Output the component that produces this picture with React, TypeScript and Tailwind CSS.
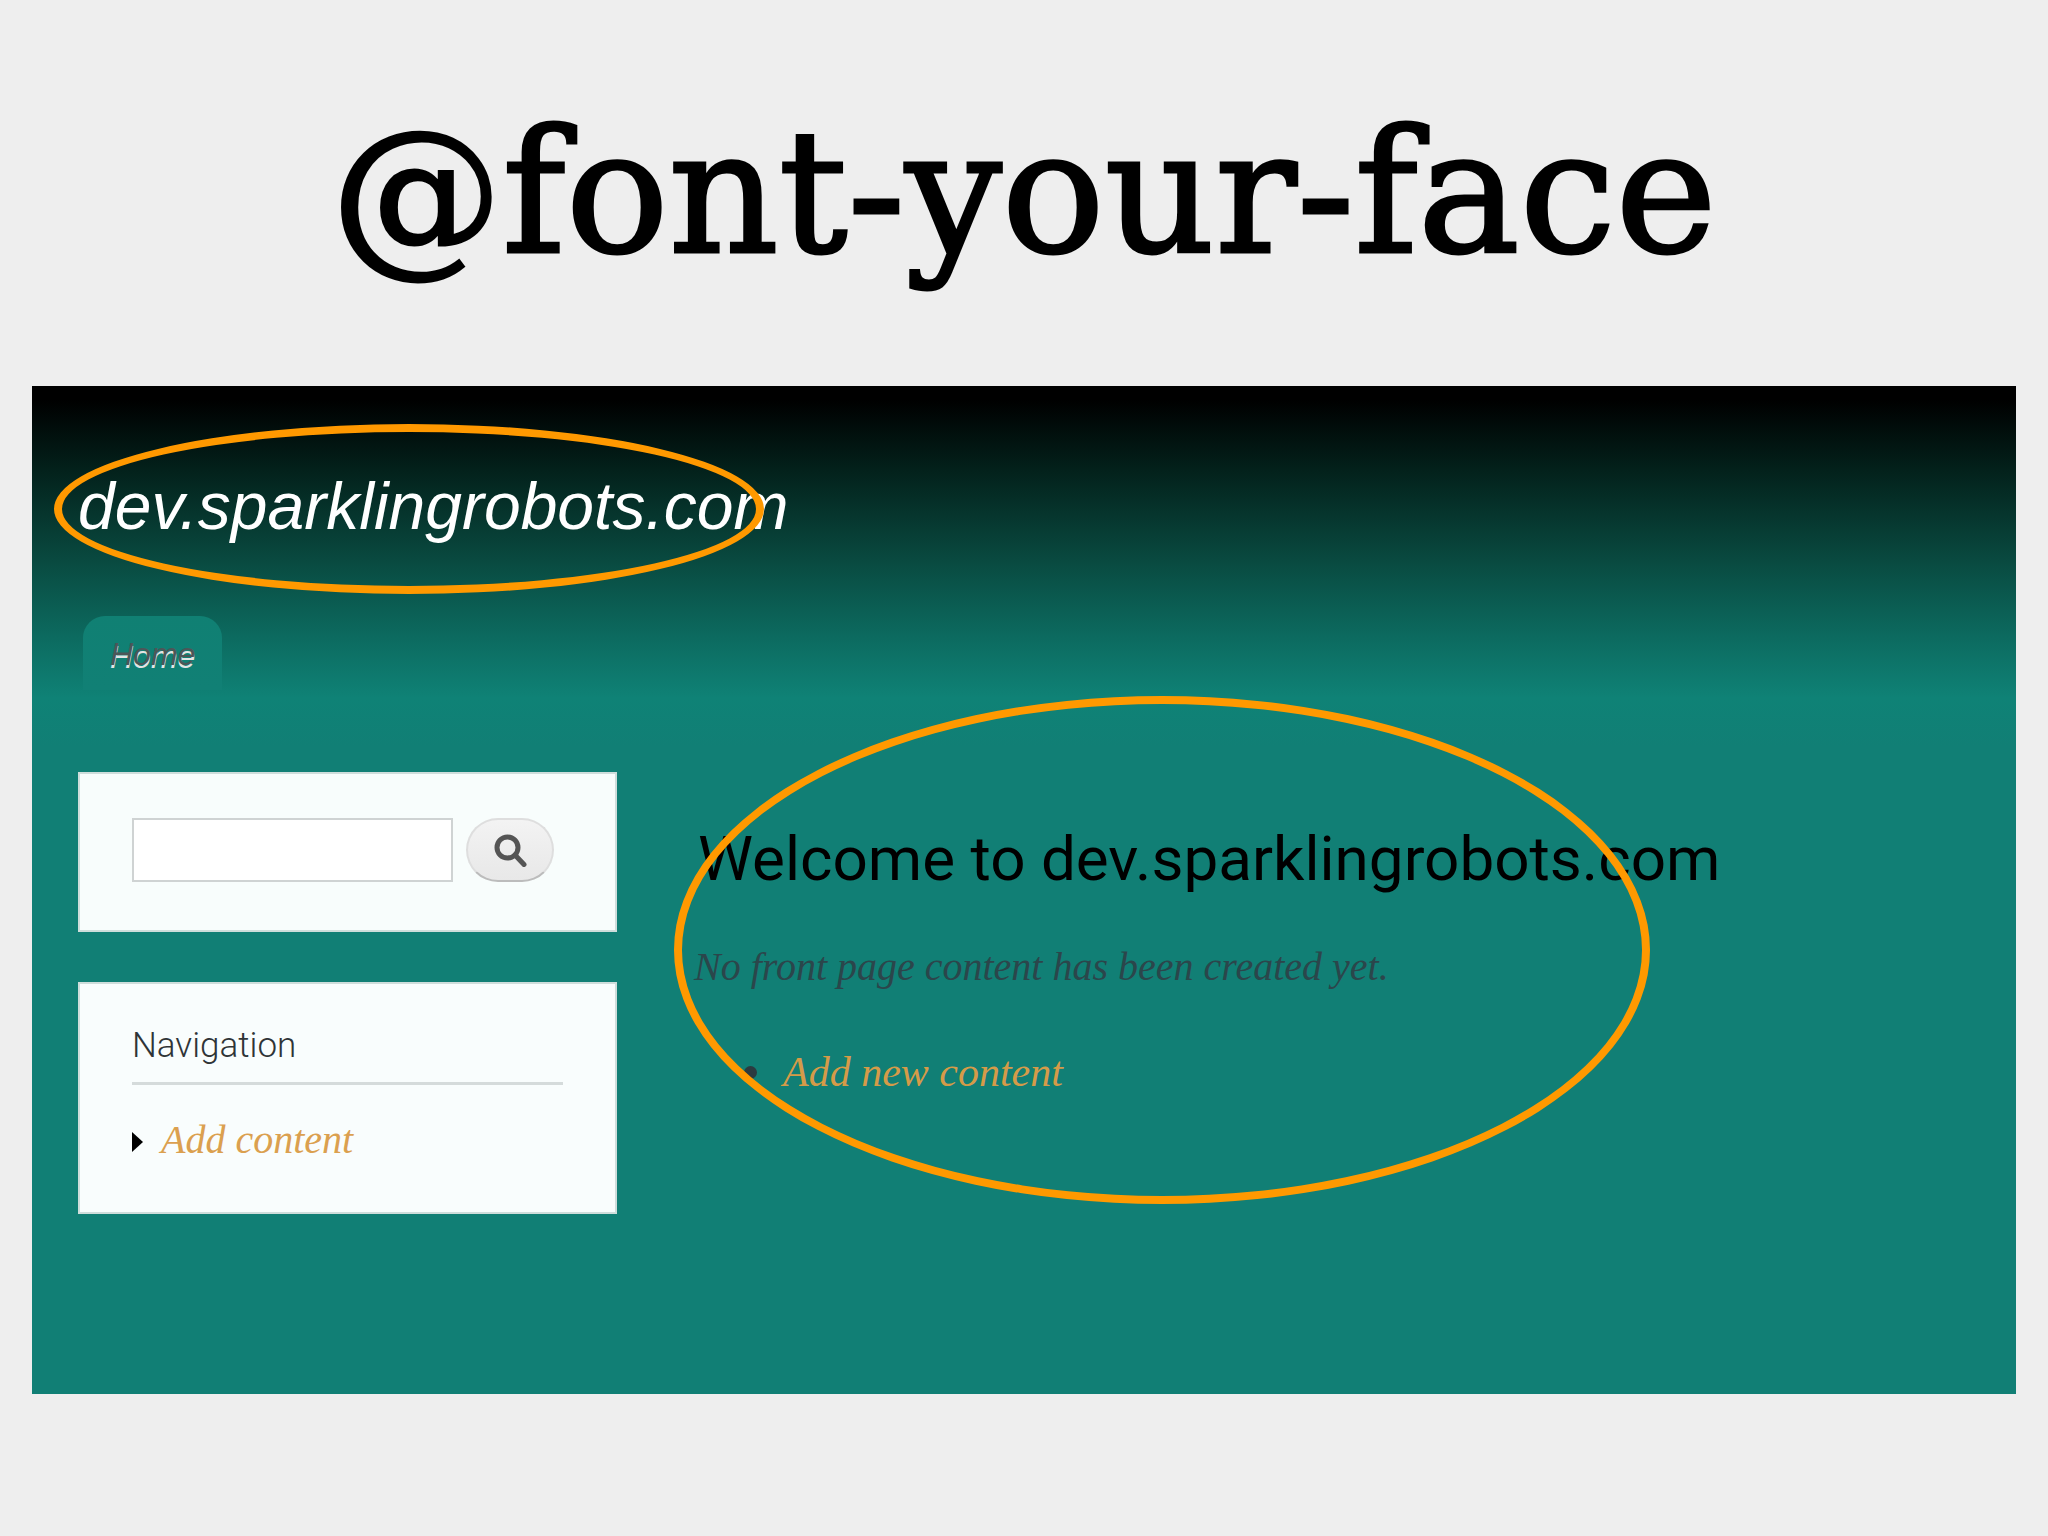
import React from "react";

function SearchIcon() {
  return (
    <svg viewBox="0 0 33 33" className="size-[33px]" fill="none" stroke="#555" aria-hidden="true">
      <circle cx="13.5" cy="13.5" r="10.5" strokeWidth="5" />
      <path d="M21 21 L30 30.5" strokeWidth="5" strokeLinecap="round" />
    </svg>
  );
}

function SiteHeader() {
  return (
    <header className="px-[46px] pt-[84px]">
      <p className="font-['Liberation_Sans',sans-serif] text-[66px] leading-[72px] text-white italic">
        <a href="#">dev.sparklingrobots.com</a>
      </p>
      <nav className="mt-[74px] ml-[5px] flex">
        <a
          href="#"
          className="rounded-t-[22px] bg-linear-to-b from-[#108073] to-[#118075] px-[27px] pt-[18px] pb-4 font-['Liberation_Sans',sans-serif] text-[32px] leading-10 text-[#4c5658] italic [text-shadow:0_3px_0_#e2e4e4]"
        >
          Home
        </a>
      </nav>
    </header>
  );
}

function Sidebar() {
  return (
    <aside className="flex w-[539px] shrink-0 flex-col gap-[50px]">
      <form
        role="search"
        onSubmit={(e) => e.preventDefault()}
        className="flex gap-[13px] border-2 border-[#cfdddb] bg-[#f8fdfc] px-[52px] pt-[44px] pb-[48px]"
      >
        <input
          type="text"
          aria-label="Search"
          className="h-16 w-[321px] border-2 border-[#cfd3d3] bg-white px-3 text-[32px] outline-none"
        />
        <button
          type="submit"
          aria-label="Search"
          className="flex h-16 w-[88px] items-center justify-center rounded-full border-2 border-[#dedede] border-b-[#bcbcbc] bg-linear-to-b from-[#f3f3f3] to-[#e8e8e8]"
        >
          <SearchIcon />
        </button>
      </form>
      <section className="border-2 border-[#cfdddb] bg-[#f9fdfd] px-[52px] pt-[40px] pb-[48px]">
        <h2 className="border-b-3 border-[#d5dbdb] pb-[14px] font-[Roboto,sans-serif] text-[35px] leading-[44px] font-light text-[#2f3437]">
          Navigation
        </h2>
        <ul className="pt-[31px]">
          <li className="flex items-center gap-[18px]">
            <svg viewBox="0 0 11 20" className="mt-1 h-5 w-[11px]" aria-hidden="true">
              <path d="M0 0 L11 10 L0 20Z" />
            </svg>
            <a href="#" className="font-['Liberation_Serif',serif] text-[40px] leading-[48px] text-[#dba04f] italic">
              Add content
            </a>
          </li>
        </ul>
      </section>
    </aside>
  );
}

function Content() {
  return (
    <main className="flex-1 pt-[49px] font-['Liberation_Serif',serif] text-[40px] leading-[48px] italic">
      <h2 className="pl-1 font-[Roboto,sans-serif] text-[62px] leading-[76px] text-black not-italic">
        Welcome to dev.sparklingrobots.com
      </h2>
      <p className="mt-[46px] text-[#2b464b]">No front page content has been created yet.</p>
      <ul className="mt-[57px]">
        <li className="flex items-center gap-[26px] pl-[50px]">
          <span className="size-[13px] rounded-full bg-[#2b3b40]" />
          <a href="#" className="text-[42px] text-[#d59b48]">
            Add new content
          </a>
        </li>
      </ul>
    </main>
  );
}

export default function App() {
  return (
    <div className="min-h-screen bg-[#eee] pb-[142px]">
      <h1 className="py-[93px] text-center font-['DejaVu_Serif',serif] text-[171px] leading-[200px] text-black [-webkit-text-stroke:3px_#000]">
        @font-your-face
      </h1>
      <div className="relative mx-8 bg-[#117f75] bg-[linear-gradient(to_bottom,#000_0px,#000_14px,#03211b_84px,#094a40_175px,#0c6a5f_250px,#0f8276_312px,#117f75_360px)] pb-[180px]">
        <SiteHeader />
        <div className="flex gap-[77px] px-[46px] pt-[82px]">
          <Sidebar />
          <Content />
        </div>
        <div className="pointer-events-none absolute top-[38px] left-[22px] h-[170px] w-[710px] rounded-[50%] border-8 border-[#ff9900]" />
        <div className="pointer-events-none absolute top-[310px] left-[642px] h-[508px] w-[976px] rounded-[50%] border-8 border-[#ff9900]" />
      </div>
    </div>
  );
}
